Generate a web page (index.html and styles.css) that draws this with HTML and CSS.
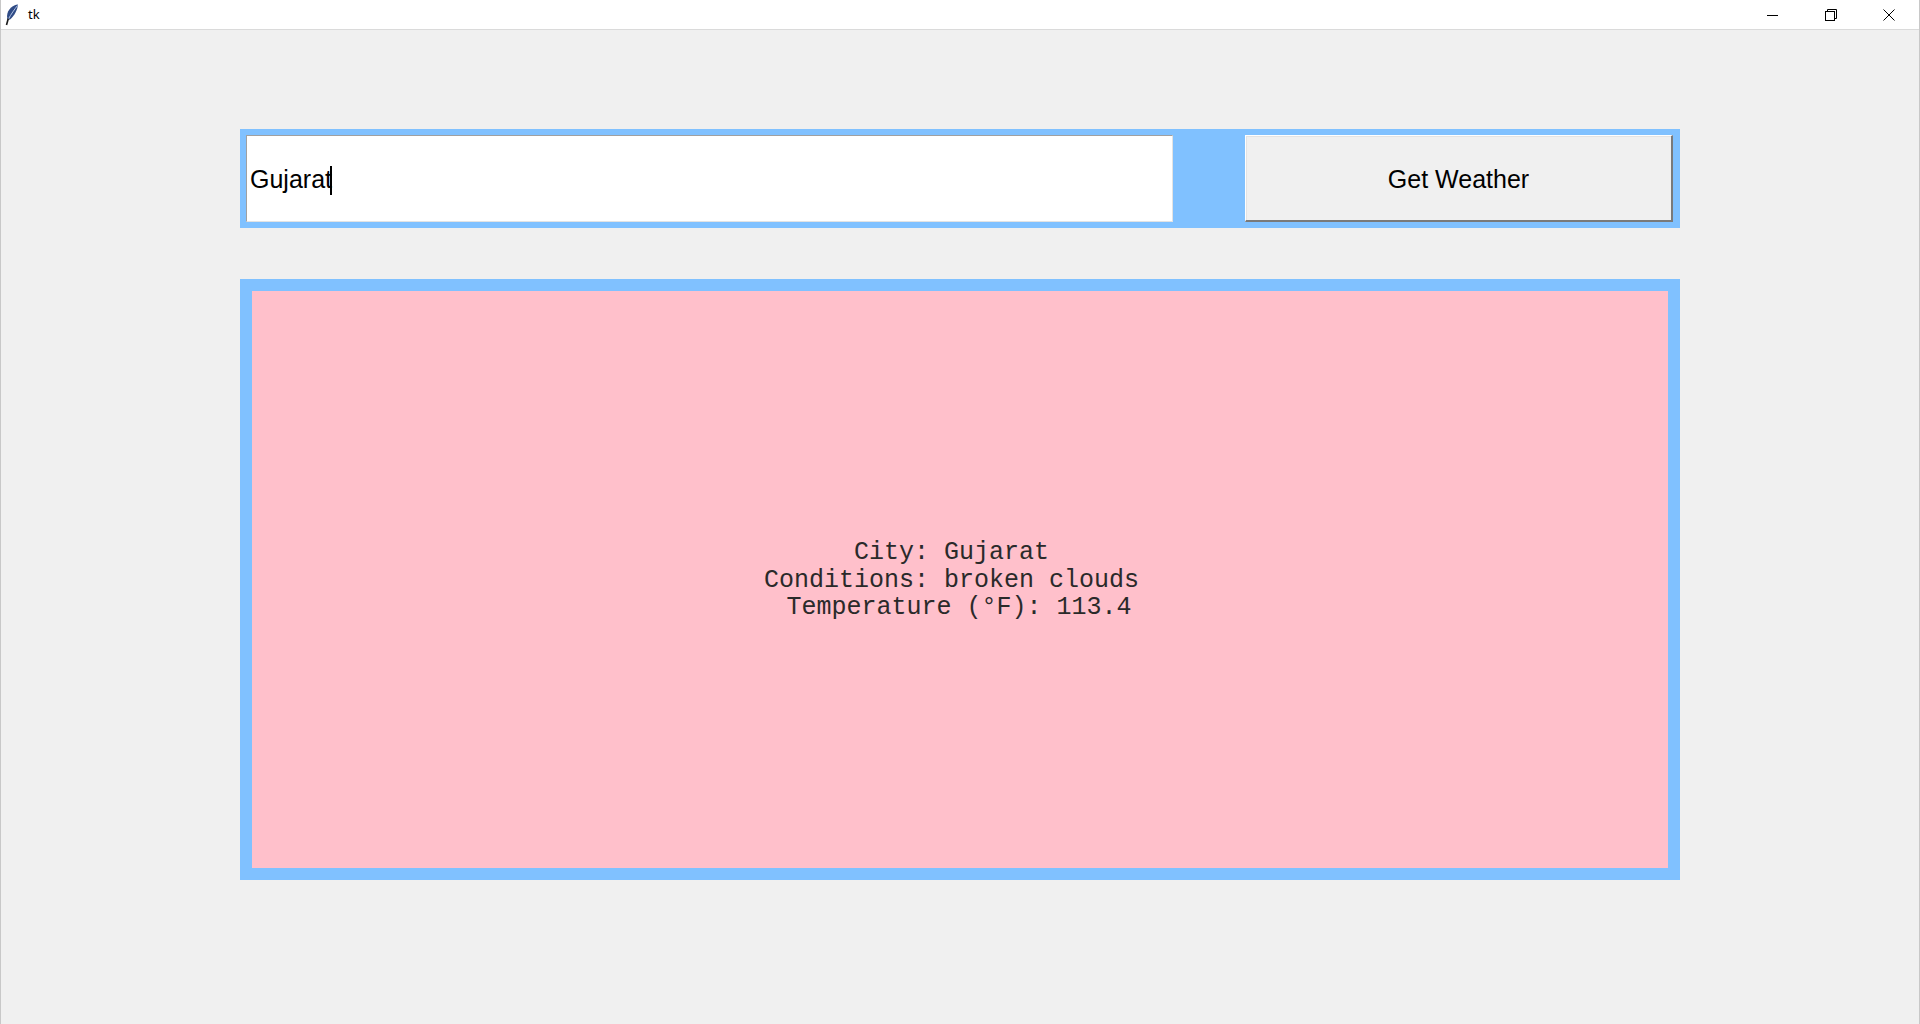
FILE: index.html
```html
<!DOCTYPE html>
<html>
<head>
<meta charset="utf-8">
<link rel="stylesheet" href="styles.css">
</head>
<body>
<div class="window">
  <div class="titlebar">
    <div class="title-left">
      <svg class="feather" width="14" height="22" viewBox="0 0 14 22">
        <path d="M13 0.5 C8 1 2.5 5 2 12 L2.5 16 L5 15.5 C9.5 11.5 12.5 6 13 0.5 Z" fill="#2f4b86"/>
        <path d="M12.5 1.5 C9.5 5.5 6 10 3.2 15.5" stroke="#b3c5e6" stroke-width="1" fill="none"/>
        <path d="M3.3 14.5 L1.5 21" stroke="#1a1a1a" stroke-width="1.6"/>
      </svg>
      <span class="title-text">tk</span>
    </div>
    <div class="controls">
      <div class="ctl">
        <svg width="12" height="12" viewBox="0 0 12 12"><path d="M0 6.5 H11" stroke="#000" stroke-width="1"/></svg>
      </div>
      <div class="ctl">
        <svg width="12" height="12" viewBox="0 0 12 12"><rect x="0.5" y="2.5" width="9" height="9" fill="none" stroke="#000"/><path d="M2.5 2.5 V0.5 H11.5 V9.5 H9.5" fill="none" stroke="#000"/></svg>
      </div>
      <div class="ctl">
        <svg width="12" height="12" viewBox="0 0 12 12"><path d="M0.5 0.5 L11.5 11.5 M11.5 0.5 L0.5 11.5" stroke="#000" stroke-width="1"/></svg>
      </div>
    </div>
  </div>
  <div class="content">
    <div class="search-frame">
      <div class="entry"><span class="entry-text">Gujarat</span><span class="caret"></span></div>
      <div class="gap"></div>
      <div class="button">Get Weather</div>
    </div>
    <div class="result-frame">
      <div class="result">
        <div class="result-text">City: Gujarat
Conditions: broken clouds
 Temperature (°F): 113.4</div>
      </div>
    </div>
  </div>
</div>
</body>
</html>
```
FILE: styles.css
```css
html, body {
  margin: 0;
  padding: 0;
  width: 1920px;
  height: 1024px;
  overflow: hidden;
  background: #f0f0f0;
  font-family: "Liberation Sans", Arial, sans-serif;
}
.window {
  width: 1920px;
  height: 1024px;
  box-sizing: border-box;
  border-left: 1px solid #c8c8c8;
  border-right: 1px solid #c8c8c8;
  display: flex;
  flex-direction: column;
}
.titlebar {
  height: 29px;
  background: #ffffff;
  border-bottom: 1px solid #dadada;
  display: flex;
  align-items: center;
  justify-content: space-between;
}
.title-left {
  display: flex;
  align-items: center;
  padding-left: 4px;
}
.feather {
  display: block;
}
.title-text {
  font-family: "Noto Sans", "Liberation Sans", sans-serif;
  font-size: 13px;
  color: #000;
  margin-left: 9px;
  margin-top: -1px;
}
.controls {
  display: flex;
  height: 29px;
  margin-right: 1px;
}
.ctl {
  width: 58px;
  height: 29px;
  display: flex;
  align-items: center;
  justify-content: center;
}
.content {
  flex: 1;
  padding-top: 99px;
  padding-left: 239px;
}
.search-frame {
  width: 1440px;
  height: 99px;
  box-sizing: border-box;
  background: #80c1ff;
  padding: 6px 7px 6px 6px;
  display: flex;
}
.entry {
  width: 927px;
  height: 87px;
  box-sizing: border-box;
  background: #ffffff;
  border-top: 1px solid #a0a0a0;
  border-left: 1px solid #a0a0a0;
  border-right: 1px solid #e3e3e3;
  border-bottom: 1px solid #e3e3e3;
  display: flex;
  align-items: center;
  padding-left: 3px;
  padding-top: 2px;
}
.entry-text {
  font-size: 25px;
  color: #000;
  line-height: 29px;
}
.caret {
  width: 2px;
  height: 29px;
  background: #000;
  margin-left: -2px;
  margin-top: 1px;
}
.gap {
  width: 72px;
}
.button {
  width: 428px;
  height: 87px;
  box-sizing: border-box;
  background: #f0f0f0;
  border-top: 1px solid #ffffff;
  border-left: 1px solid #ffffff;
  border-right: 2px solid #7a7a7a;
  border-bottom: 2px solid #7a7a7a;
  box-shadow: inset 1px 1px 0 #e3e3e3;
  display: flex;
  align-items: center;
  justify-content: center;
  font-size: 25px;
  color: #000;
  padding-top: 2px;
}
.result-frame {
  margin-top: 51px;
  width: 1440px;
  height: 601px;
  box-sizing: border-box;
  background: #80c1ff;
  padding: 12px;
}
.result {
  width: 100%;
  height: 100%;
  background: #ffc0cb;
  display: flex;
  align-items: center;
  justify-content: center;
}
.result-text {
  font-family: "Liberation Mono", "Courier New", monospace;
  font-size: 25px;
  line-height: 27.5px;
  color: #2a2a2a;
  white-space: pre;
  text-align: center;
  margin-right: 17px;
  margin-top: 2px;
}
```
